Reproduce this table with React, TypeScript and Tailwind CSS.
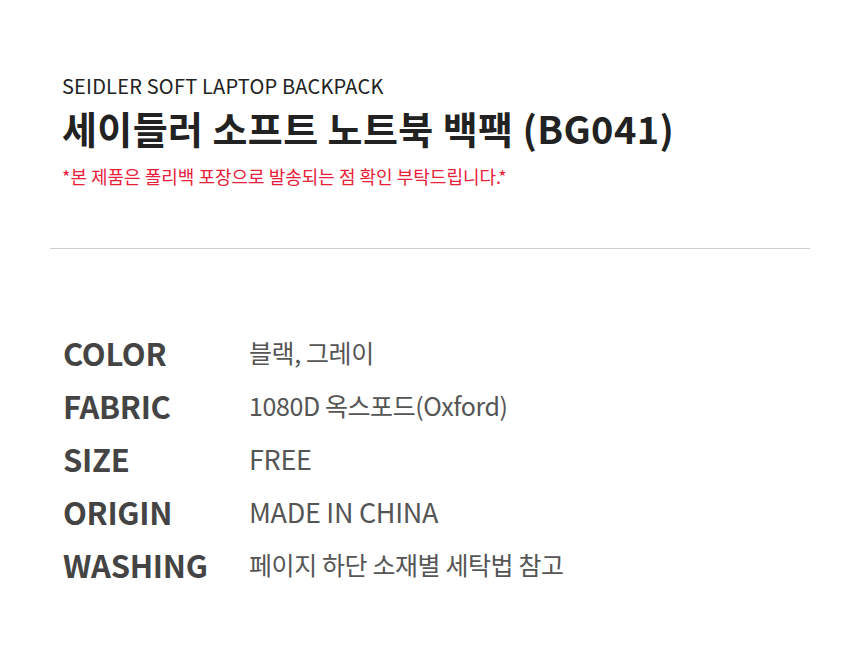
const specs = [
  { label: "COLOR", value: "블랙, 그레이", latin: false },
  { label: "FABRIC", value: "1080D 옥스포드(Oxford)", latin: false },
  { label: "SIZE", value: "FREE", latin: true },
  { label: "ORIGIN", value: "MADE IN CHINA", latin: true },
  { label: "WASHING", value: "페이지 하단 소재별 세탁법 참고", latin: false },
];

const App = () => {
  return (
    <div className="w-[860px] h-[646px] bg-white font-['Noto_Sans_CJK_KR','Noto_Sans',sans-serif]">
      <div className="px-[62px] pt-[72px]">
        <div className="text-[20px] leading-[28px] text-[#222] tracking-[0.2px]">
          SEIDLER SOFT LAPTOP BACKPACK
        </div>
        <h1 className="mt-[4px] text-[38px] leading-[48px] font-bold text-[#222] tracking-[0.4px]">
          세이들러 소프트 노트북 백팩 (BG041)
        </h1>
        <p className="mt-[12px] text-[18px] leading-[24px] text-[#e8203a]">
          *본 제품은 폴리백 포장으로 발송되는 점 확인 부탁드립니다.*
        </p>
      </div>
      <div className="mx-[50px] mt-[60px] border-t border-[#cfcfcf]" />
      <div className="px-[63px] pt-[87px] flex flex-col gap-[19px]">
        {specs.map((s) => (
          <div key={s.label} className="flex items-center h-[34px]">
            <div className="w-[186px] text-[31px] font-bold text-[#444] tracking-[-0.3px]">{s.label}</div>
            <div
              className={
                s.latin
                  ? "text-[27px] text-[#555] tracking-[-0.3px]"
                  : "text-[25px] text-[#555] tracking-[-0.4px]"
              }
            >
              {s.value}
            </div>
          </div>
        ))}
      </div>
    </div>
  );
};

export default App;
